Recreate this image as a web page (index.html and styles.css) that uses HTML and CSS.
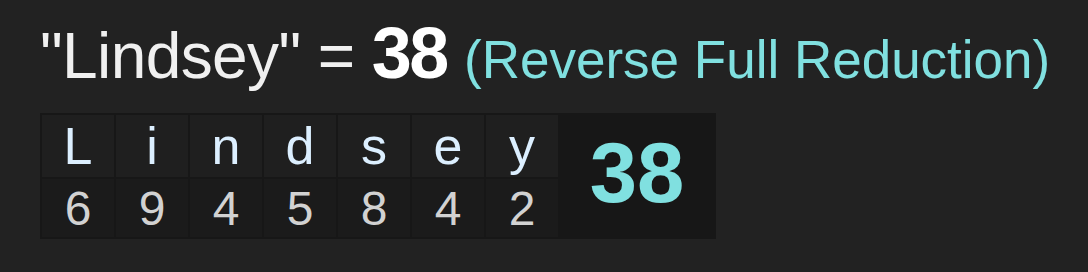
FILE: index.html
```html
<!DOCTYPE html>
<html lang="en">
<head>
<meta charset="utf-8">
<title>Lindsey = 38</title>
<link rel="stylesheet" href="styles.css">
</head>
<body>
<main class="page">
  <h1 class="title">"Lindsey" = <span class="title-sum">38</span> <span class="title-method">(Reverse Full Reduction)</span></h1>
  <div class="breakdown">
    <div class="cell-total">38</div>
    <div class="cell letter">L</div>
    <div class="cell letter">i</div>
    <div class="cell letter">n</div>
    <div class="cell letter">d</div>
    <div class="cell letter">s</div>
    <div class="cell letter">e</div>
    <div class="cell letter">y</div>
    <div class="cell digit">6</div>
    <div class="cell digit">9</div>
    <div class="cell digit">4</div>
    <div class="cell digit">5</div>
    <div class="cell digit">8</div>
    <div class="cell digit">4</div>
    <div class="cell digit">2</div>
  </div>
</main>
</body>
</html>
```

FILE: styles.css
```css
html, body {
  margin: 0;
  padding: 0;
  background: #222222;
}

.page {
  padding: 12px 40px 0 40px;
  font-family: "Liberation Sans", Arial, Helvetica, sans-serif;
  display: flex;
  flex-direction: column;
  align-items: flex-start;
}

.title {
  margin: 0 0 19px 0;
  font-size: 64px;
  font-weight: 400;
  letter-spacing: -0.6px;
  color: #f0f0f0;
  white-space: nowrap;
}

.title-sum {
  font-size: 72px;
  font-weight: 700;
  letter-spacing: -2.5px;
  color: #ffffff;
}

.title-method {
  font-size: 53px;
  letter-spacing: 0;
  color: #80e0e0;
}

.breakdown {
  display: grid;
  grid-template-columns: repeat(7, 72px) 154px;
  grid-template-rows: 62px 58px;
  gap: 2px;
  padding: 2px;
  background: #171717;
}

.cell {
  display: flex;
  align-items: center;
  justify-content: center;
}

.letter {
  background: #1f1f1f;
  color: #dcefff;
  font-size: 52px;
}

.digit {
  background: #1b1b1b;
  color: #d2d2d2;
  font-size: 48px;
}

.cell-total {
  grid-column: 8;
  grid-row: 1 / span 2;
  display: flex;
  align-items: center;
  justify-content: center;
  padding-bottom: 6px;
  background: #171717;
  color: #80e0e0;
  font-size: 85px;
  font-weight: 700;
}
```
